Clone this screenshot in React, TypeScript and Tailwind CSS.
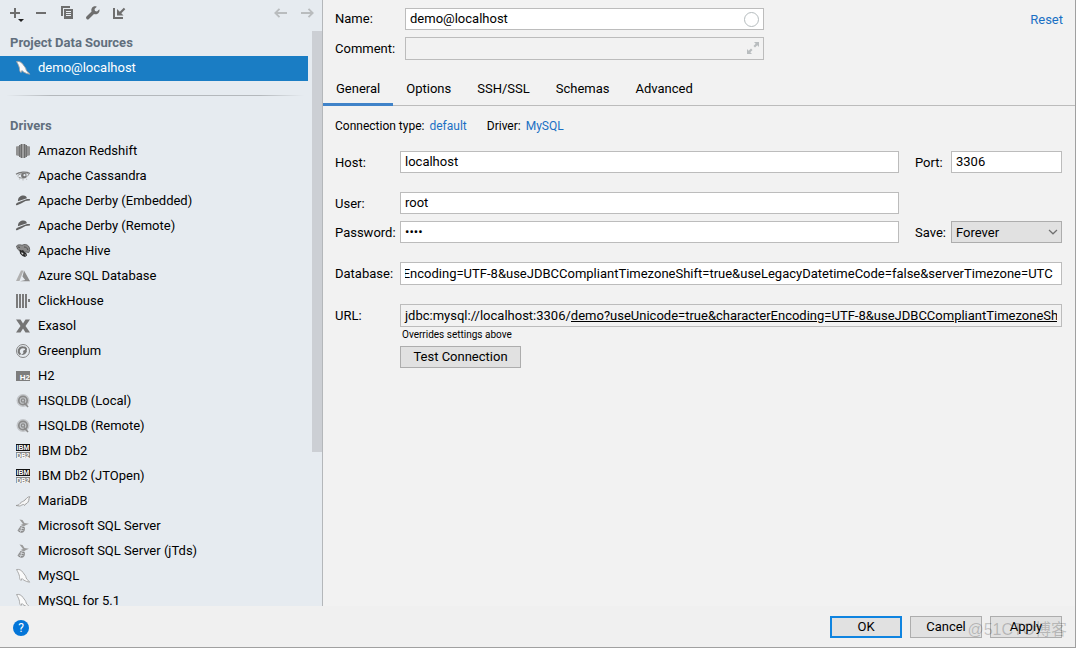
import { useEffect, useRef, useState } from "react";
import type { ReactNode } from "react";

type IconProps = { children: ReactNode };

function Icon({ children }: IconProps) {
  return (
    <svg width="16" height="16" viewBox="0 0 16 16" className="shrink-0" aria-hidden="true">
      {children}
    </svg>
  );
}

const RedshiftIcon = () => (
  <Icon>
    <path fill="#929292" d="M1 3.500 4 3v10l-3-.7zM15 3.500 12 3v10l3-.7z" />
    <path fill="#737373" d="M4 2h1v12H4zM11 2h1v12h-1z" />
    <path fill="#8a8a8a" d="M5 1.500h1v13H5zM10 1.500h1v13h-1z" />
    <path fill="#6b6b6b" d="M6 1h1v14H6zM9 1h1v14H9z" />
    <path fill="#a0a0a0" d="M7 1h2v14H7z" />
  </Icon>
);

const CassandraIcon = () => (
  <Icon>
    <path fill="none" stroke="#777" strokeWidth="1.200" d="M1 6.200C4 4 11 3.200 15 5.500" />
    <path fill="none" stroke="#929292" d="M2.500 8c2.500-3 8.500-3.500 11.500-2-1.500 3.500-6.500 5.500-10.500 3" />
    <circle cx="8.800" cy="7.500" r="2.700" fill="#777" />
    <circle cx="9.500" cy="7.200" r="1.100" fill="#e6ebf0" />
    <path fill="none" stroke="#aaa" strokeWidth=".8" d="m5 10-.6 1.500M8 11v1.500M11 10.500l.8 1.300" />
  </Icon>
);

const DerbyIcon = () => (
  <Icon>
    <path fill="#626262" d="M3 7.500c0-3 2.500-5 5.500-5 2 0 3 1 3.400 2.800l-9 3zM14.900 6v1.400l-4.400.6L6 10.500l-4 1.800c-1.500.4-1.500-1.300.3-2.500L8 7.600l4-1.600z" />
  </Icon>
);

const HiveIcon = () => (
  <Icon>
    <path fill="#8a8a8a" stroke="#555" strokeWidth=".8" d="M1.500 3C3 1.200 6 1.700 7 2.300c2-1.500 5-1 6.500.8 1.500 1.800 1.500 5 .3 6.500L11 9 7 10 2.500 6z" />
    <path fill="#2b2b2b" d="m4.500 6.500 2 1L8 7l1.500 2 2 1.500.5 2-2 1.500-2.500-1L5 10.500z" />
    <path fill="#ddd" d="m6.500 9 2 1.500-.5 1.200-1.500-1zM9.500 11.500l1.500.3-.5 1z" />
    <path fill="none" stroke="#444" strokeWidth=".8" d="M9 4c2 0 3.500 1 3.800 3M3 4l2 .5" />
  </Icon>
);

const AzureIcon = () => (
  <Icon>
    <path fill="#b0b0b0" d="M6 2.500h2.500L4.500 13H1z" />
    <path fill="#8c8c8c" d="M9 2.500 15 13.300H5l5.200-1.200L7.500 8.500z" />
  </Icon>
);

const ClickHouseIcon = () => (
  <Icon>
    <path fill="#7b7b7b" d="M1 1h2v14H1zM4 1h2v14H4zM7 1h2v14H7zM10 1h2v14h-2zM13 6h2v3h-2z" />
  </Icon>
);

const ExasolIcon = () => (
  <Icon>
    <path fill="#757575" d="M1 1.500h4.500L8 5.500l2.500-4H15L10.500 8l4.500 6.500h-4.500L8 10.500l-2.500 4H1L5.500 8z" />
  </Icon>
);

const GreenplumIcon = () => (
  <Icon>
    <circle cx="8" cy="8" r="6.500" fill="none" stroke="#858585" />
    <path fill="none" stroke="#777" strokeWidth="2" d="M5.500 11.500A4 4 0 0 1 8 4.200c1.500 0 2.600.5 3 1.500.4 1.800-1.200 3-2.800 2.800" />
    <path fill="#777" d="m6 12 2-1.500 1.500-2.500h2.500c-.5 2.500-3 4.300-6 4z" />
  </Icon>
);

const H2Icon = () => (
  <Icon>
    <path fill="#7d7d7d" d="M1 3h14v10H1z" />
    <text x="15" y="12" textAnchor="end" fill="#fff" fontSize="8" fontWeight="700" fontFamily="Liberation Sans">
      H2
    </text>
  </Icon>
);

const HsqldbIcon = () => (
  <Icon>
    <circle cx="8" cy="7.500" r="6.500" fill="#c3c6c9" />
    <circle cx="8" cy="7.500" r="4.200" fill="none" stroke="#8a8a8a" strokeWidth="1.700" />
    <circle cx="8" cy="7.500" r="1.700" fill="none" stroke="#8a8a8a" strokeWidth="1.200" />
    <path fill="none" stroke="#8a8a8a" strokeWidth="1.600" d="m9 9.500 4 4.500" />
  </Icon>
);

const Db2Icon = () => (
  <Icon>
    <path fill="#111" d="M1 1h14v7H1z" />
    <path fill="#858585" d="M1 9h14v6H1z" />
    <text x="8" y="7" textAnchor="middle" fill="#fff" fontSize="7" fontWeight="700" fontFamily="Liberation Sans">
      IBM
    </text>
    <text x="8" y="14.500" textAnchor="middle" fill="#fff" fontSize="6.500" fontWeight="700" fontFamily="Liberation Sans">
      DB2
    </text>
  </Icon>
);

const MariaIcon = () => (
  <Icon>
    <path
      fill="#f5f5f5"
      stroke="#969696"
      strokeWidth=".9"
      d="M1 12.500c2-.2 3-.8 4-2 1.500-2 3.500-2 5-3.500S12.500 3.500 15 3.800c-.3.700-.9.700-1 1.700 0 3-1.500 5-3.500 5.500l-1 1.500-1-1c-2 .2-2.500 1.500-4 1.500z"
    />
  </Icon>
);

const SqlServerIcon = () => (
  <Icon>
    <path fill="#9b9b9b" d="m4.500 1.500 3 .5 2 3 4.500.8-3.500 1.500L9 8.500 5.500 7 8 6z" />
    <path fill="#868686" d="M5.500 8 9.500 9c.8 2 .2 4.500-1.500 5.500-2.500.5-4.500-.5-5.500-2z" />
    <path fill="none" stroke="#d9dde1" strokeWidth=".8" d="m4.500 9.800 4.500 1M3.500 12l5 .8M7 8.500 5.500 14" />
  </Icon>
);

const MySqlIcon = () => (
  <Icon>
    <path
      fill="#fafafa"
      stroke="#a2a2a2"
      strokeWidth=".9"
      d="M1.500 1.500c2.500-.5 5 .5 6.500 3 1.500 2.300 2.800 3 3.200 5.500.5 2 2.800 2.500 3.500 4.200l-3-.7c-2-1-3.700-1.500-4.700-3l-1 2C4.700 11.500 4.500 10 4.500 8.500 4.200 6.500 3 4 1.500 1.500z"
    />
  </Icon>
);

const drivers: { name: string; icon: () => ReactNode }[] = [
  { name: "Amazon Redshift", icon: RedshiftIcon },
  { name: "Apache Cassandra", icon: CassandraIcon },
  { name: "Apache Derby (Embedded)", icon: DerbyIcon },
  { name: "Apache Derby (Remote)", icon: DerbyIcon },
  { name: "Apache Hive", icon: HiveIcon },
  { name: "Azure SQL Database", icon: AzureIcon },
  { name: "ClickHouse", icon: ClickHouseIcon },
  { name: "Exasol", icon: ExasolIcon },
  { name: "Greenplum", icon: GreenplumIcon },
  { name: "H2", icon: H2Icon },
  { name: "HSQLDB (Local)", icon: HsqldbIcon },
  { name: "HSQLDB (Remote)", icon: HsqldbIcon },
  { name: "IBM Db2", icon: Db2Icon },
  { name: "IBM Db2 (JTOpen)", icon: Db2Icon },
  { name: "MariaDB", icon: MariaIcon },
  { name: "Microsoft SQL Server", icon: SqlServerIcon },
  { name: "Microsoft SQL Server (jTds)", icon: SqlServerIcon },
  { name: "MySQL", icon: MySqlIcon },
  { name: "MySQL for 5.1", icon: MySqlIcon },
];

const tabs = ["General", "Options", "SSH/SSL", "Schemas", "Advanced"];

const parameters =
  "demo?useUnicode=true&characterEncoding=UTF-8&useJDBCCompliantTimezoneShift=true&useLegacyDatetimeCode=false&serverTimezone=UTC";

function ToolButton({ label, children }: { label: string; children: ReactNode }) {
  return (
    <button type="button" aria-label={label} className="flex h-[26px] w-[26px] items-center justify-center">
      {children}
    </button>
  );
}

function Toolbar() {
  return (
    <div className="flex h-[31px] shrink-0 items-start px-[2px]">
      <ToolButton label="Add">
        <svg width="20" height="20" viewBox="0 0 20 20" aria-hidden="true">
          <path fill="#6e6e6e" d="M9 5h2v4h4v2h-4v4H9v-4H5V9h4z" />
          <path fill="#222" d="M13 16h6l-3 3z" />
        </svg>
      </ToolButton>
      <ToolButton label="Remove">
        <Icon>
          <path fill="#6e6e6e" d="M3 7h10v2H3z" />
        </Icon>
      </ToolButton>
      <ToolButton label="Duplicate">
        <Icon>
          <path fill="#6e6e6e" d="M2 1h9v2H4v8H2z" />
          <path fill="#6e6e6e" fillRule="evenodd" d="M5 4h9v10H5zm2 2v1h5V6zm0 2v1h5V8zm0 2v1h5v-1z" />
        </Icon>
      </ToolButton>
      <ToolButton label="Properties">
        <Icon>
          <path
            fill="#6e6e6e"
            d="M14.300 4.200 12 6.500l-2-.5-.5-2 2.300-2.300C10 .9 7.800 1.500 6.800 3.200c-.6 1-.6 2.200-.2 3.300L1.500 11.600a1.700 1.700 0 0 0 2.400 2.400L9 8.900c1.500.6 3.300.3 4.500-1 1-1 1.300-2.500.8-3.700z"
          />
        </Icon>
      </ToolButton>
      <ToolButton label="Import">
        <Icon>
          <path fill="#6e6e6e" d="M2 3h2v9h8v2H2zM6 4v6.500h6.500L10.300 8.300l4-4-1.500-1.500-4 4z" />
        </Icon>
      </ToolButton>
      <div className="flex-1" />
      <ToolButton label="Back">
        <Icon>
          <path fill="none" stroke="#b9bcbe" strokeWidth="1.800" d="M14 8H2.500M6.500 3.800 2.300 8l4.200 4.200" />
        </Icon>
      </ToolButton>
      <ToolButton label="Forward">
        <Icon>
          <path fill="none" stroke="#b9bcbe" strokeWidth="1.800" d="M2 8h11.500M9.500 3.800 13.700 8l-4.200 4.200" />
        </Icon>
      </ToolButton>
    </div>
  );
}

function Sidebar() {
  return (
    <aside className="flex w-[323px] shrink-0 flex-col border-r border-[#b4b7ba] bg-[#e6ebf0]">
      <Toolbar />
      <div className="relative min-h-0 flex-1 overflow-hidden">
        <h2 className="flex h-[25px] items-center px-[10px] pb-[2px] font-bold text-[#616f7d]">Project Data Sources</h2>
        <button
          type="button"
          className="flex h-[25px] w-[308px] items-center gap-[7px] bg-[#1a7dc4] pb-[1px] pl-[15px] text-left text-white"
        >
          <MySqlIcon />
          demo@localhost
        </button>
        <div className="mt-[14px] mr-[18px] ml-[6px] h-px bg-[linear-gradient(to_right,transparent,#b4b8bc_15%,#b4b8bc_85%,transparent)]" />
        <h2 className="mt-[18px] flex h-[25px] items-center px-[10px] pb-[1px] font-bold text-[#616f7d]">Drivers</h2>
        <ul>
          {drivers.map(({ name, icon: DriverIcon }) => (
            <li key={name}>
              <button type="button" className="flex h-[25px] w-[308px] items-center gap-[7px] pb-[1px] pl-[15px] text-left">
                <DriverIcon />
                {name}
              </button>
            </li>
          ))}
        </ul>
        <div className="absolute top-0 right-0 h-[421px] w-[10px] bg-[#cccfd4]" />
      </div>
    </aside>
  );
}

const field = "h-[22px] w-full min-w-0 border border-[#bcbcbc] bg-white px-[4px] pb-[1px] outline-none";

function ConnectionForm() {
  const database = useRef<HTMLInputElement>(null);

  useEffect(() => {
    const input = database.current;
    if (input) input.scrollLeft = input.scrollWidth;
  }, []);

  return (
    <div className="pr-[13px] pl-[12px]">
      <div className="flex h-[40px] items-center text-[12px]">
        <span>Connection type:</span>
        <a href="#type" className="ml-[5px] text-[#1a70c4]">default</a>
        <span className="ml-[20px]">Driver:</span>
        <a href="#driver" className="ml-[5px] text-[#1a70c4]">MySQL</a>
      </div>

      <div className="mt-[5px] grid grid-cols-[65px_minmax(0,1fr)_52px_111px] items-center">
        <label htmlFor="host" className="pt-[2px]">Host:</label>
        <input id="host" className={field} defaultValue="localhost" />
        <label htmlFor="port" className="pt-[2px] pl-[16px]">Port:</label>
        <input id="port" className={field} defaultValue="3306" />
      </div>

      <div className="mt-[19px] grid grid-cols-[65px_minmax(0,1fr)_52px_111px] items-center gap-y-[7px]">
        <label htmlFor="user" className="pt-[2px]">User:</label>
        <input id="user" className={field} defaultValue="root" />
        <div className="col-span-2" />
        <label htmlFor="password" className="pt-[2px]">Password:</label>
        <input id="password" type="password" className={field} defaultValue="root" />
        <label htmlFor="save" className="pt-[2px] pl-[16px]">Save:</label>
        <div className="relative">
          <select
            id="save"
            className="block h-[22px] w-full appearance-none border border-[#adadad] bg-[#e1e1e1] px-[4px] pt-[1px] outline-none"
          >
            <option>Forever</option>
            <option>Until restart</option>
            <option>For session</option>
            <option>Never</option>
          </select>
          <svg
            width="10"
            height="6"
            viewBox="0 0 10 6"
            className="pointer-events-none absolute top-[8px] right-[4px]"
            aria-hidden="true"
          >
            <path fill="none" stroke="#707070" strokeWidth="1.200" d="m1 1 4 3.800L9 1" />
          </svg>
        </div>
      </div>

      <div className="mt-[19px] grid grid-cols-[65px_minmax(0,1fr)] items-center gap-y-[19px]">
        <label htmlFor="database">Database:</label>
        <input
          id="database"
          ref={database}
          className="h-[23px] w-full min-w-0 border border-[#bcbcbc] bg-white pr-[8px] pl-[4px] outline-none"
          defaultValue={parameters}
        />
        <label htmlFor="url">URL:</label>
        <div className="flex h-[23px] items-center border border-[#bcbcbc] px-[4px]">
          <span>jdbc:mysql://localhost:3306/</span>
          <input id="url" className="min-w-0 flex-1 bg-transparent underline outline-none" defaultValue={parameters} />
        </div>
      </div>

      <div className="pl-[65px]">
        <p className="h-[19px] pl-[2px] text-[10px] leading-[16px]">Overrides settings above</p>
        <button type="button" className="h-[22px] w-[121px] border border-[#adadad] bg-[#e1e1e1]">
          Test Connection
        </button>
      </div>
    </div>
  );
}

function Details() {
  const [active, setActive] = useState("General");

  return (
    <main className="min-w-0 flex-1">
      <div className="flex justify-between pt-[8px] pr-[12px] pl-[12px]">
        <div className="grid w-[429px] grid-cols-[70px_minmax(0,1fr)] items-center gap-y-[7px]">
          <label htmlFor="name">Name:</label>
          <div className="relative">
            <input id="name" className={field} defaultValue="demo@localhost" />
            <button
              type="button"
              aria-label="Colour"
              className="absolute top-[4px] right-[5px] h-[15px] w-[15px] rounded-full border border-[#b5bcbe]"
            />
          </div>
          <label htmlFor="comment">Comment:</label>
          <div className="relative">
            <input
              id="comment"
              className="block h-[23px] w-full border border-[#bcbcbc] bg-transparent pr-[22px] pl-[4px] outline-none"
            />
            <button type="button" aria-label="Expand" className="absolute top-[5px] right-[5px]">
              <svg width="12" height="12" viewBox="0 0 12 12" aria-hidden="true">
                <path fill="#b9bdbf" d="M7 0h5v5l-1.700-1.700L8 5.500 6.500 4l2.200-2.300zM5 12H0V7l1.700 1.700L4 6.500 5.500 8l-2.200 2.300z" />
              </svg>
            </button>
          </div>
        </div>
        <a href="#reset" className="h-[22px] pt-[1px] leading-[22px] text-[#1a70c4]">Reset</a>
      </div>

      <div role="tablist" className="mt-[12px] flex h-[34px] border-b border-[#bcbcbc]">
        {tabs.map((tab) => (
          <button
            key={tab}
            type="button"
            role="tab"
            aria-selected={tab === active}
            onClick={() => setActive(tab)}
            className={
              tab === active
                ? "-mb-px border-b-3 border-[#4083c9] px-[13px] pt-[2px]"
                : "-mb-px border-b-3 border-transparent px-[13px] pt-[2px]"
            }
          >
            {tab}
          </button>
        ))}
      </div>

      <ConnectionForm />
    </main>
  );
}

function Footer() {
  return (
    <footer className="relative flex h-[41px] shrink-0 items-center gap-[8px] bg-[#f0f0f0] pt-[1px] pr-[13px] pl-[13px]">
      <button
        type="button"
        aria-label="Help"
        className="mt-[2px] h-[16px] w-[16px] rounded-full bg-[#0375d8] text-[12px] leading-[16px] text-white"
      >
        ?
      </button>
      <div className="flex-1" />
      <button type="button" className="h-[22px] w-[72px] border-2 border-[#0f84e0] bg-[#e1e1e1] leading-[18px]">OK</button>
      <button type="button" className="h-[22px] w-[72px] border border-[#adadad] bg-[#e1e1e1] leading-[20px]">Cancel</button>
      <button type="button" className="h-[22px] w-[72px] border border-[#adadad] bg-[#e1e1e1] leading-[20px]">Apply</button>
      <span className="pointer-events-none absolute right-[8px] bottom-[6px] font-['Liberation_Sans','Noto_Sans_CJK_SC',sans-serif] text-[16px] leading-[22px] text-black/20">
        @51CTO博客
      </span>
    </footer>
  );
}

export default function App() {
  return (
    <div className="flex h-screen flex-col overflow-hidden border-r border-b border-[#a0a0a0] bg-[#f2f2f2] font-['Roboto','Noto_Sans_CJK_SC',sans-serif] text-[13px] leading-[18px] text-black">
      <div className="flex min-h-0 flex-1">
        <Sidebar />
        <Details />
      </div>
      <Footer />
    </div>
  );
}
